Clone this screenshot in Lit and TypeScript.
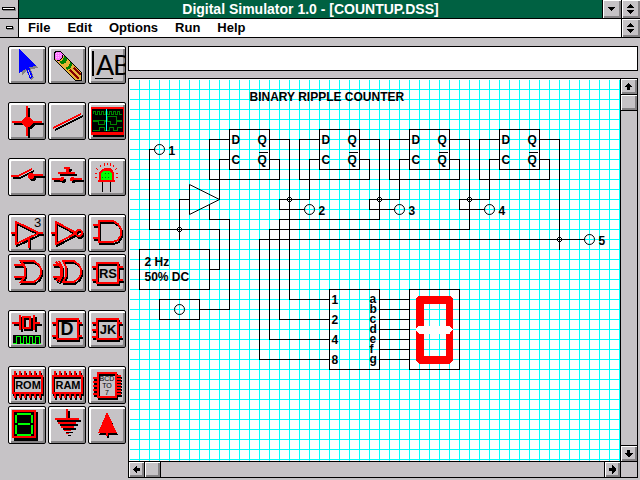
import { LitElement, html, svg, css, TemplateResult } from "lit";
import { customElement } from "lit/decorators.js";

interface Tool {
  name: string;
  icon: TemplateResult;
}

const range = (n: number) => Array.from({ length: n }, (_, i) => i);

/* Icons are drawn on a 38 x 38 field, the outer size of a tool button. */

const pointer = svg`
  <polygon fill="#848284" points="13,5 30,22 23,23 26,32 23,34 19,25 14,29"/>
  <polygon fill="#00f" points="11,3 28,20 21,21 25,31 22,33 18,23 11,27"/>
  <path d="M20 24L23 31" stroke="#c6c3c6" fill="none"/>`;

const pencil = svg`
  <polygon fill="#e7b239" points="8,5 12,5 33,26 33,34 27,34 6,13 6,8"/>
  <polygon fill="#ff75ff" points="8,5 12,5 16,9 11,16 6,12 6,8"/>
  <path d="M8 7H11M8 9H13M8 11H12" stroke="#ffc3ff" stroke-dasharray="1 1" fill="none"/>
  <polygon fill="#008200" points="16,10 19,13 18,17 14,18 11,16 15,14"/>
  <polygon fill="#008200" points="22,16 24,18 23,22 19,24 17,22 21,20"/>
  <path d="M22 24L31 33M26 22L33 29" stroke="#840000" stroke-width="2" fill="none"/>
  <path d="M8 5H12L33 26V34H27L6 13V8ZM9 15C12 15 15 12 15 9" stroke="#000" fill="none"/>`;

const label = svg`
  <rect x="4" y="5" width="2" height="25"/>
  <text class="thin" x="8" y="29" font-size="27">A</text>
  <text class="thin" x="25" y="29" font-size="27">B</text>
  <rect x="7" y="32" width="18" height="1"/>`;

const junction = svg`<g class="deep">
  <rect x="4" y="19" width="30" height="2"/><rect x="18" y="4" width="2" height="30"/>
  <polygon points="17,15 21,15 25,19 25,21 21,25 17,25 13,21 13,19"/></g>`;

const wire = svg`<g class="deep"><path class="line" d="M5 26L33 12"/></g>`;

const scope = svg`
  <rect x="3" y="5" width="33" height="28" fill="#f00"/>
  <rect x="5" y="33" width="31" height="2"/>
  <rect x="4" y="7" width="31" height="23"/>
  <g fill="none" stroke="#008200">
    <path d="M5 12V9H7V12H9V9H11V12H13V9H15V12H17V9H19V12H21V9H23V12H25V9H27V12H29V9H31V12H34"/>
    <path d="M5 18H19V14H28V18H34M5 19H10V22H16V19H22V22H28V19H34M5 28H11V25H16V28H21V25H25V28H29V25H34"/>
  </g>
  <rect x="18" y="7" width="1" height="22" fill="#0ff"/>`;

const toggle = svg`<g class="deep">
  <path class="line" d="M3 18H10L24 11M24 17H35"/><circle cx="23" cy="18" r="3"/></g>`;

const push = svg`<g class="deep">
  <rect x="16" y="9" width="6" height="2"/><rect x="18" y="11" width="3" height="3"/>
  <rect x="10" y="14" width="17" height="2"/>
  <path class="line" d="M4 21H15M24 21H34"/><circle cx="14" cy="21" r="2"/><circle cx="24" cy="21" r="2"/></g>`;

const led = svg`
  <path fill="#f00" d="M11 24V15L14 11L17 10H21L24 11L26 15V24Z"/>
  <rect x="10" y="22" width="17" height="2" fill="#f00"/>
  <path fill="#0f0" d="M13 22V16L15 13H22L24 16V22Z"/>
  <path fill="#008200" d="M17 15h1v1h-1zM20 15h1v1h-1zM14 19h1v1h-1zM17 19h1v1h-1zM20 19h1v1h-1z"/>
  <path stroke="#f00" d="M7 15H9M7 19H9M28 15H30M28 19H30M8 10L10 12M12 7L13 9M16 5V8M19 5V7M22 5V8M26 7L25 9M29 10L27 12"/>
  <rect x="14" y="24" width="1" height="10"/><rect x="22" y="24" width="1" height="10"/>`;

const gate = (d: string, extra: TemplateResult | string = "") =>
  svg`<g class="near"><path class="line" d=${d}/>${extra}</g>`;

const triState = svg`${gate("M3 19H8M31 19H35M8 8V30L31 19ZM21 24V34")}
  <text class="pale" x="26" y="13" font-size="13">3</text>`;
const inverter = gate("M3 19H8M8 8V30L28 19Z", svg`<circle class="line" cx="31" cy="19" r="3"/>`);
const andGate = gate("M5 11H11M5 24H11M11 7H25L30 10L33 15V21L30 26L25 28H11Z");
const orGate = gate("M6 11H15M6 23H15M13 7H26L31 11L33 15V20L31 24L26 28H13L17 22V13Z");
const xorGate = gate("M5 11H13M5 23H13M15 7H26L31 11L33 15V20L31 24L26 28H15L18 22V13ZM11 7L14 13V22L11 28M8 8L13 13V22L8 27");

const rs = svg`${gate("M4 13H9M4 26H9M30 13H35M30 26H35M9 9H30V29H9Z")}
  <text class="heavy" x="20" y="24" font-size="13">RS</text>`;
const dFlip = svg`${gate("M4 13H9M4 26H9M30 13H34M30 26H34M9 9H30V29H9Z")}
  <text class="heavy" x="19" y="25" font-size="18">D</text>`;
const jk = svg`${gate("M4 13H9M4 20H9M4 27H9M30 13H34M30 27H34M9 9H30V29H9Z")}
  <text class="heavy" x="20" y="24" font-size="13">JK</text>`;

const clock = svg`<g class="deep">
    <path class="line" d="M4 13H11M26 13H32M12 5V20M26 5V20M15 7H22V18H15Z"/></g>
  <rect x="5" y="25" width="28" height="9"/>
  <path stroke="#0f0" fill="none" d="M5 33H8V26H12V33H15V26H18V33H21V26H24V33H27V26H31V33H33"/>`;

const memory = (t: string) => svg`<g class="near">
    <path class="line" d="M5 10H34V27H5Z"/>
    ${range(6).map((i) => svg`<rect x=${6 + i * 5} y="5" width="2" height="5"/><rect x=${6 + i * 5} y="27" width="2" height="5"/>`)}
  </g>
  <text class="heavy" x="20" y="23" font-size="11">${t}</text>`;

const bcd = svg`<g class="near">
    <path class="line" d="M10 7H28V31H10Z"/>
    ${range(5).map((i) => svg`<rect x="5" y=${11 + i * 4} width="5" height="2"/>`)}
    ${range(7).map((i) => svg`<rect x="28" y=${9 + i * 3} width="5" height="2"/>`)}
  </g>
  <text class="tiny" x="19" y="15">BCD</text>
  <text class="tiny" x="19" y="22">TO</text>
  <text class="tiny" x="19" y="29">7</text>`;

const sevenSeg = svg`
  <rect x="6" y="6" width="24" height="29"/><rect x="4" y="4" width="24" height="28" fill="#f00"/>
  <rect x="6" y="6" width="20" height="24"/>
  <path stroke="#0f0" stroke-width="2" fill="none" d="M9 8H23M8 9V17M24 9V17M10 18H22M8 19V28M24 19V28M9 29H23"/>`;

const ground = svg`<g class="deep">
  <rect x="18" y="3" width="2" height="9"/><rect x="7" y="12" width="24" height="2"/>
  <rect x="10" y="16" width="18" height="2"/><rect x="13" y="20" width="13" height="2"/>
  <rect x="16" y="24" width="7" height="1"/><rect x="18" y="27" width="3" height="1"/></g>`;

const high = svg`<g class="near"><polygon points="19,6 29,27 10,27"/><rect x="18" y="27" width="2" height="3"/></g>`;

const toolGroups: Tool[][] = [
  [{ name: "Select", icon: pointer }, { name: "Erase", icon: pencil }, { name: "Label", icon: label }],
  [{ name: "Junction", icon: junction }, { name: "Wire", icon: wire }, { name: "Scope", icon: scope }],
  [{ name: "Switch", icon: toggle }, { name: "Push button", icon: push }, { name: "Lamp", icon: led }],
  [
    { name: "Buffer", icon: triState }, { name: "Inverter", icon: inverter }, { name: "And gate", icon: andGate },
    { name: "Or gate", icon: orGate }, { name: "Xor gate", icon: xorGate }, { name: "RS flip-flop", icon: rs },
  ],
  [{ name: "Clock", icon: clock }, { name: "D flip-flop", icon: dFlip }, { name: "JK flip-flop", icon: jk }],
  [
    { name: "ROM", icon: memory("ROM") }, { name: "RAM", icon: memory("RAM") }, { name: "Decoder", icon: bcd },
    { name: "Display", icon: sevenSeg }, { name: "Ground", icon: ground }, { name: "High", icon: high },
  ],
];

const menus = ["File", "Edit", "Options", "Run", "Help"];

/* The schematic: every part sits on the 10-pixel grid, measured from the sheet's corner. */

const flipFlops = [100, 190, 280, 370];
const junctions = [[50, 150], [160, 120], [250, 120], [340, 120], [430, 160]];
const probes = [[30, 70], [180, 130], [270, 130], [360, 130], [460, 160]];
const wires = [
  "M25 70H20V150H90V190H80",
  "M50 160V120H60",
  "M80 125V140H100V230H70",
  "M90 120V80H100",
  "M140 60H160V220H200",
  "M230 60H250V140H150V240H200",
  "M320 60H340V150H140V260H200",
  "M410 60H430V170M455 160H130V280H200",
];

const flipFlop = (x: number) => svg`
  <rect x=${x} y="50" width="40" height="40"/>
  <path d="M${x} 60H${x - 20}V100H${x + 50}V80H${x + 40}"/>
  <text x=${x + 2} y="64">D</text><text x=${x + 28} y="64">Q</text>
  <text x=${x + 2} y="84">C</text><text x=${x + 28} y="84">Q</text>
  <path d="M${x + 29} 73H${x + 38}"/>`;

const schematic = svg`
  ${flipFlops.map(flipFlop)}
  ${wires.map((d) => svg`<path d=${d}/>`)}
  ${[150, 240, 330].map((x) => svg`<path d="M${x + 25} 130H${x}V120H${x + 30}V80H${x + 40}"/>`)}
  ${junctions.map(([x, y]) => svg`<circle cx=${x} cy=${y} r="2"/>`)}
  ${probes.map(([x, y], i) => svg`<circle class="round" cx=${x} cy=${y} r="5"/><text x=${x + 9} y=${y + 5}>${i + 1}</text>`)}
  <path class="round" d="M60 105V135L90 120Z"/>
  <text x="120" y="21">BINARY RIPPLE COUNTER</text>
  <rect x="10" y="170" width="70" height="40"/>
  <text x="15" y="186">2 Hz</text><text x="15" y="201">50% DC</text>
  <rect x="30" y="220" width="40" height="20"/><circle class="round" cx="50" cy="230" r="5"/>
  <rect x="200" y="210" width="50" height="80"/>
  ${["1", "2", "4", "8"].map((t, i) => svg`<text x="202" y=${224 + i * 20}>${t}</text>`)}
  ${[..."abcdefg"].map((t, i) => svg`<text x="240" y=${223 + i * 10}>${t}</text><path d="M250 ${220 + i * 10}H280"/>`)}
  <rect x="280" y="210" width="50" height="80"/>
  <path class="digit" fill-rule="evenodd" d="M289 216H320L323 219V281L320 284H289L286 281V219ZM294 224V276H316V224Z"/>
  <polygon class="gap" points="286,250 289,246 320,246 323,250 320,254 289,254"/>`;

const arrowPaths: Record<string, string> = {
  up: "M7 4L11 8H9V11H6V8H3L7 4Z",
  down: "M6 4H9V7H12L8 11H7L3 7H6Z",
  left: "M4 7L8 3V6H11V9H8V12L4 8Z",
  right: "M11 7L7 3V6H4V9H7V12L11 8Z",
};

@customElement("app-root")
export class AppRoot extends LitElement {
  static styles = css`
    :host {
      display: flex; flex-direction: column; min-height: 100vh; box-sizing: border-box;
      background: #c6c3c6; color: #000;
      font: bold 13px/18px "Liberation Sans", Arial, sans-serif;
    }
    * { box-sizing: border-box; }
    button { margin: 0; padding: 0; border: 0; border-radius: 0; font: inherit; color: inherit; background: #c6c3c6; }
    svg { display: block; shape-rendering: crispEdges; }
    .bar { display: flex; height: 19px; flex: none; border-bottom: 1px solid #000; }
    .title { background: #006142; color: #fff; }
    .menubar { background: #fff; }
    h1 { flex: 1; margin: 0; font-size: 14px; line-height: 18px; font-weight: bold; text-align: center; white-space: nowrap; overflow: hidden; }
    .system { width: 19px; border-right: 1px solid #000; color: #000; }
    .raised { width: 19px; border-left: 1px solid #000; box-shadow: inset 1px 1px #fff, inset -2px -2px #848284; }
    .menus { flex: 1; display: flex; gap: 17px; padding-left: 9px; }
    .menus button { background: none; }
    .work { flex: 1; display: flex; gap: 2px; padding: 8px 2px 2px 8px; min-height: 0; }
    .tools { flex: none; display: flex; flex-direction: column; gap: 18px; }
    .group { display: grid; grid-template-columns: repeat(3, 38px); gap: 2px; }
    .tool { height: 38px; border: 1px solid #000; border-radius: 2px; box-shadow: inset 2px 2px #fff, inset -2px -2px #848284; overflow: hidden; }
    .near, .deep { fill: #f00; stroke: none; }
    .near { filter: drop-shadow(1px 2px 0 #000); }
    .deep { filter: drop-shadow(2px 2px 0 #000); }
    .line { fill: none; stroke: #f00; stroke-width: 2px; }
    .thin { font-family: Lato, sans-serif; font-weight: 400; }
    .pale { font-weight: 400; }
    .heavy { font-weight: 700; text-anchor: middle; }
    .tiny { font-size: 7px; font-weight: 400; text-anchor: middle; }
    .main { flex: 1; min-width: 0; display: flex; flex-direction: column; gap: 7px; }
    .entry { width: 100%; height: 25px; border: 1px solid #000; border-radius: 0; padding: 0 4px; background: #fff; font: inherit; outline: none; }
    .frame { flex: 1; display: grid; grid-template: minmax(382px, 1fr) 16px / minmax(0, 1fr) 17px; border: 1px solid #000; }
    .sheet {
      overflow: hidden; background-color: #fff; background-size: 10px 10px;
      background-image: linear-gradient(#0ff 1px, transparent 1px), linear-gradient(90deg, #0ff 1px, transparent 1px);
      box-shadow: inset 1px 1px #fff;
    }
    .schematic { width: 100%; height: 100%; fill: none; stroke: #000; }
    .schematic text { fill: #000; stroke: none; font-size: 12px; }
    .schematic .round { shape-rendering: auto; }
    .schematic .digit { fill: #f00; stroke: none; }
    .schematic .gap { fill: #fff; stroke: none; }
    .scroll { display: flex; }
    .vertical { flex-direction: column; border-left: 1px solid #000; }
    .horizontal { border-top: 1px solid #000; }
    .scroll button { flex: none; box-shadow: inset 1px 1px #fff, inset -2px -2px #848284; }
    .vertical button { height: 16px; border-bottom: 1px solid #000; }
    .horizontal button { width: 16px; border-right: 1px solid #000; }
    .vertical .end { margin-top: auto; border-bottom: 0; border-top: 1px solid #000; }
    .horizontal .end { margin-left: auto; border-right: 0; border-left: 1px solid #000; }
    .corner { border-left: 1px solid #000; border-top: 1px solid #000; }
  `;

  private arrow(dir: string, end = false) {
    return html`<button class=${end ? "end" : ""} aria-label="Scroll ${dir}">
      <svg width="15" height="15"><path d=${arrowPaths[dir]} /></svg>
    </button>`;
  }

  private restore() {
    return html`<button class="raised" aria-label="Restore">
      <svg width="18" height="18"><path d="M8 4H9L12 8H5ZM5 10H12L9 14H8Z" /></svg>
    </button>`;
  }

  render() {
    return html`
      <header class="bar title">
        <button class="system" aria-label="System menu">
          <svg width="18" height="18">
            <rect x="3" y="8" width="13" height="3" fill="#848284" />
            <rect x="2" y="7" width="13" height="3" /><rect x="3" y="8" width="11" height="1" fill="#fff" />
          </svg>
        </button>
        <h1>Digital Simulator 1.0 - [COUNTUP.DSS]</h1>
        <button class="raised" aria-label="Minimize">
          <svg width="18" height="18"><path d="M5 7H12L9 11H8Z" /></svg>
        </button>
        ${this.restore()}
      </header>
      <nav class="bar menubar">
        <button class="system" aria-label="Document menu">
          <svg width="18" height="18">
            <rect x="7" y="8" width="7" height="3" fill="#848284" />
            <rect x="6" y="7" width="7" height="3" /><rect x="7" y="8" width="5" height="1" fill="#fff" />
          </svg>
        </button>
        <div class="menus">${menus.map((m) => html`<button>${m}</button>`)}</div>
        ${this.restore()}
      </nav>
      <div class="work">
        <div class="tools">
          ${toolGroups.map((g) => html`<div class="group">
            ${g.map((t) => html`<button class="tool" aria-label=${t.name}>
              <svg width="36" height="36" viewBox="1 1 36 36">${t.icon}</svg>
            </button>`)}
          </div>`)}
        </div>
        <main class="main">
          <input class="entry" type="text" aria-label="Text" />
          <div class="frame">
            <div class="sheet">
              <svg class="schematic"><g transform="translate(0.5 0.5)">${schematic}</g></svg>
            </div>
            <div class="scroll vertical">${this.arrow("up")}<button aria-label="Vertical thumb"></button>${this.arrow("down", true)}</div>
            <div class="scroll horizontal">${this.arrow("left")}<button aria-label="Horizontal thumb"></button>${this.arrow("right", true)}</div>
            <div class="corner"></div>
          </div>
        </main>
      </div>
    `;
  }
}
